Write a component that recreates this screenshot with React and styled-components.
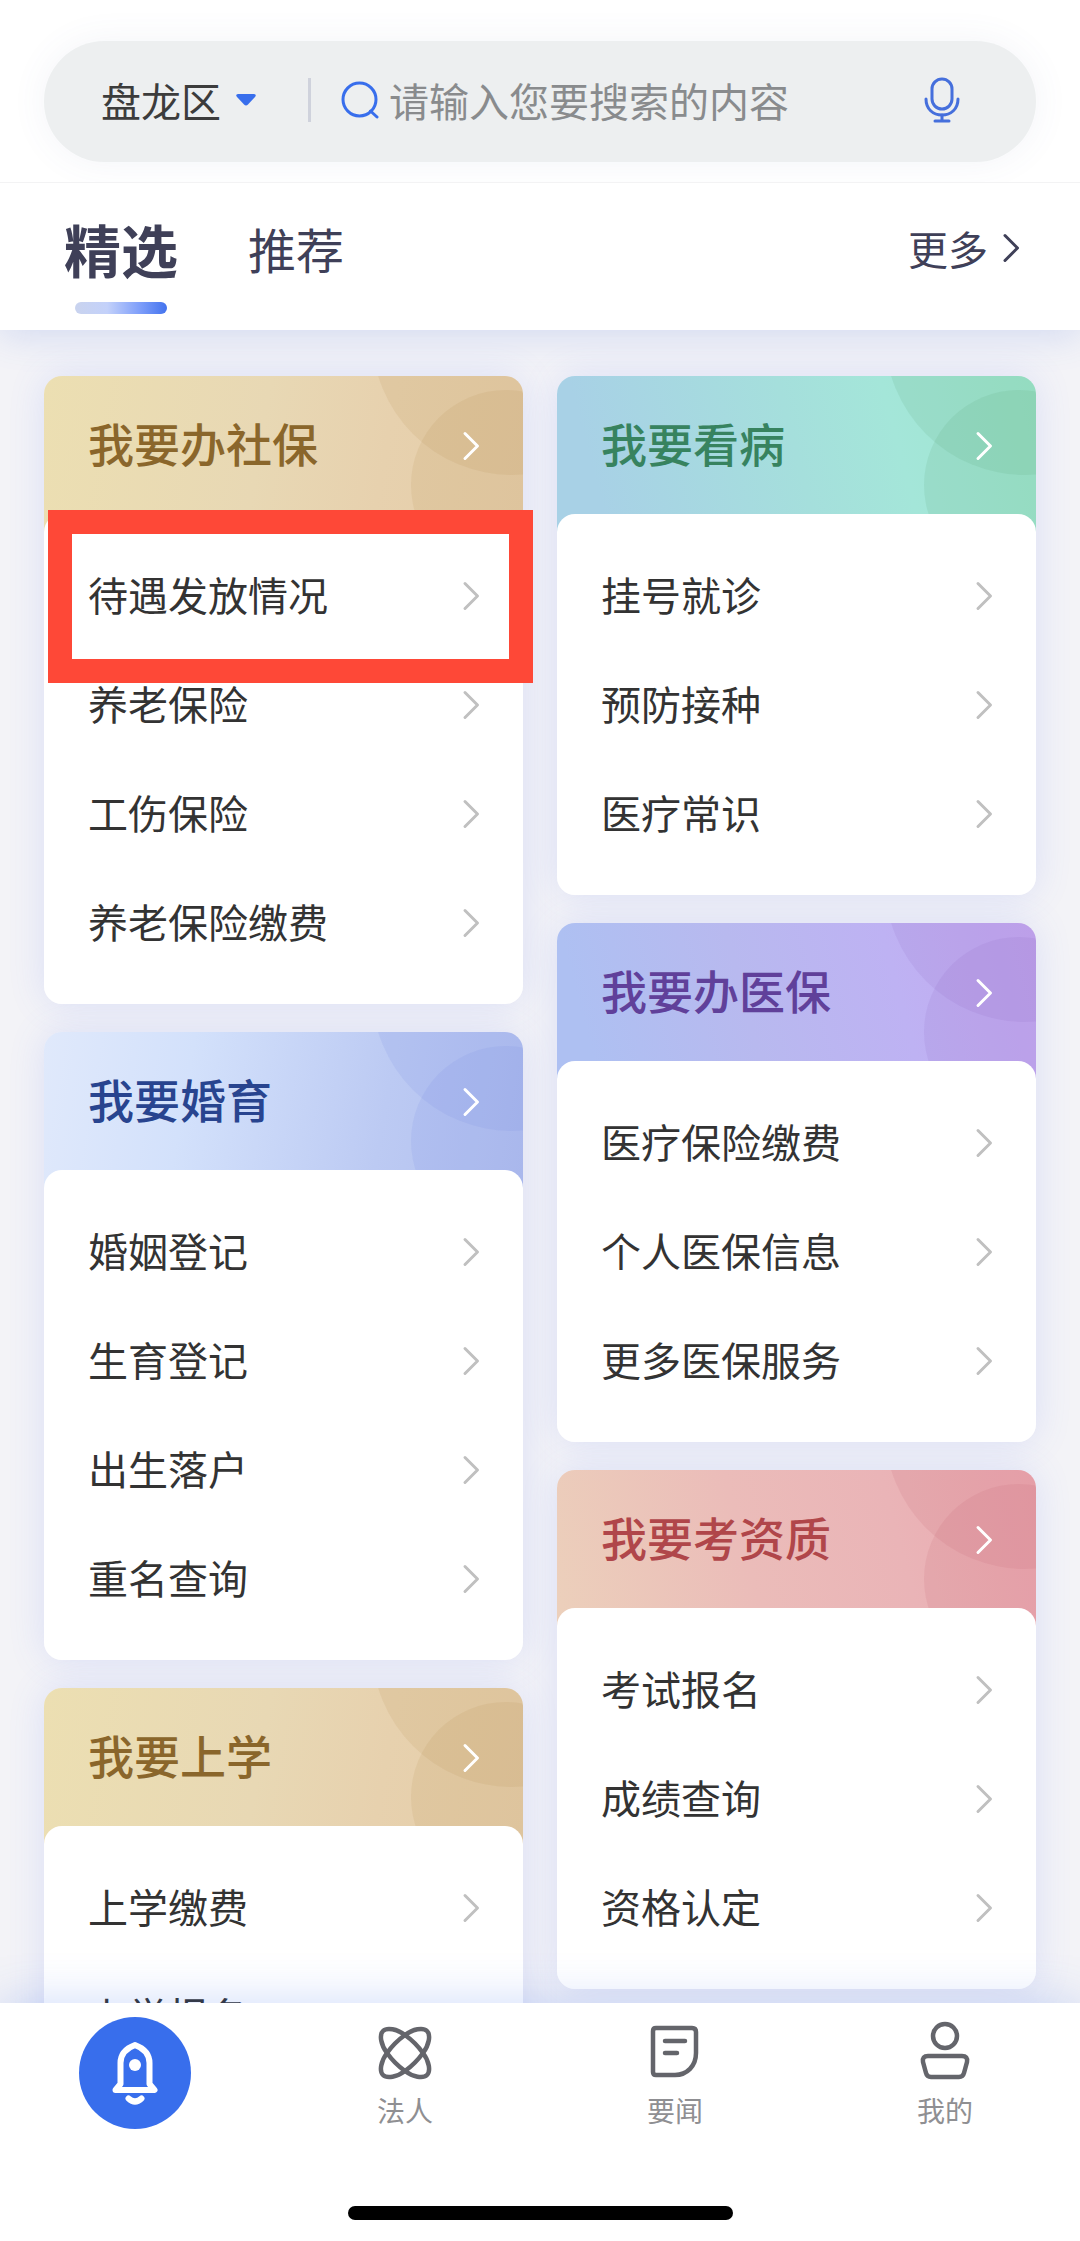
import React from 'react'
import styled, { createGlobalStyle } from 'styled-components'

const GlobalStyle = createGlobalStyle`
    *{
        box-sizing: border-box;
    }
    body{
        margin: 0;
        background: #f3f3f7;
        font-family: "Noto Sans CJK SC", sans-serif;
        color: #333;
    }
    a{
        color: inherit;
        text-decoration: none;
    }
    button, input, select{
        font-family: inherit;
        background: none;
        border: 0;
        padding: 0;
        outline: none;
    }
    svg{
        display: block;
        flex: none;
    }
`

const Page = styled.div`
    display: flex;
    flex-direction: column;
    height: 100vh;
`

const Header = styled.header`
    position: relative;
    z-index: 1;
    background: #fff;
    box-shadow: 0 4px 36px rgba(70, 110, 220, .2);
`

const SearchWrap = styled.div`
    padding: 41px 44px 20px;
    border-bottom: 1px solid #f3f3f4;
    overflow: hidden;
`

const SearchBar = styled.form`
    display: flex;
    align-items: center;
    height: 121px;
    padding: 0 76px 4px 57px;
    background: #edeff0;
    border-radius: 61px;
    box-shadow: 0 0 36px rgba(80, 100, 160, .07);
`

const Region = styled.label`
    display: flex;
    align-items: center;
    gap: 15px;
    select{
        appearance: none;
        color: #3c3c3c;
        font-size: 40px;
        line-height: 60px;
        height: 60px;
        cursor: pointer;
    }
    svg{
        pointer-events: none;
    }
`

const Divider = styled.span`
    width: 3px;
    height: 44px;
    margin: 0 30px 0 52px;
    background: #cfd2dc;
`

const SearchInput = styled.input`
    flex: 1;
    min-width: 0;
    height: 60px;
    margin-left: 10px;
    color: #333;
    font-size: 40px;
    &::placeholder{
        color: #898b8d;
        opacity: 1;
    }
`

const IconButton = styled.button`
    cursor: pointer;
`

const TabBar = styled.div`
    display: flex;
    align-items: flex-start;
    justify-content: space-between;
    padding: 25px 60px 16px 64px;
`

const Tabs = styled.div`
    display: flex;
    gap: 70px;
`

const Tab = styled.button`
    display: flex;
    flex-direction: column;
    align-items: center;
    gap: 14px;
    color: #3f4058;
    font-size: ${(p) => (p.$active ? 57 : 48)}px;
    font-weight: ${(p) => (p.$active ? 700 : 400)};
    line-height: 80px;
    cursor: pointer;
    &::after{
        content: '';
        width: 92px;
        height: 12px;
        border-radius: 6px;
        background: ${(p) => (p.$active ? 'linear-gradient(90deg, #c9d3ee, #c3d1fa 35%, #7f9ffa 70%, #4373ee)' : 'transparent')};
    }
`

const More = styled.a`
    display: flex;
    align-items: center;
    gap: 14px;
    color: #3f4058;
    font-size: 40px;
    line-height: 80px;
`

const Main = styled.main`
    flex: 1;
    min-height: 0;
    overflow-y: auto;
    scrollbar-width: none;
    padding: 46px 44px;
    display: grid;
    grid-template-columns: 1fr 1fr;
    align-items: start;
    gap: 34px;
`

const Column = styled.div`
    display: flex;
    flex-direction: column;
    gap: 28px;
`

const Card = styled.section`
    border-radius: 18px;
    box-shadow: 0 0 36px rgba(84, 112, 240, .15);
`

const CardHead = styled.a`
    position: relative;
    display: flex;
    align-items: center;
    justify-content: space-between;
    height: 156px;
    padding: 0 43px 16px 44px;
    border-radius: 18px 18px 0 0;
    overflow: hidden;
    background: ${(p) => p.$bg};
    color: ${(p) => p.$color};
    h2{
        position: relative;
        margin: 0;
        padding-bottom: 8px;
        font-size: 46px;
        font-weight: 500;
        line-height: 64px;
    }
`

const Bubbles = styled.svg`
    position: absolute;
    top: 0;
    right: 0;
    fill: ${(p) => p.$tint};
`

const HeadArrow = styled.span`
    position: relative;
`

const List = styled.ul`
    position: relative;
    list-style: none;
    margin: -18px 0 0;
    padding: 27px 0;
    background: #fff;
    border-radius: 18px;
`

const Item = styled.li`
    position: relative;
    a{
        display: flex;
        align-items: center;
        justify-content: space-between;
        height: 109px;
        padding: 0 43px 0 44px;
        font-size: 40px;
        line-height: 60px;
    }
    span{
        padding-bottom: 4px;
    }
`

const Highlight = styled.div`
    position: absolute;
    z-index: 1;
    top: -31px;
    right: -10px;
    bottom: -33px;
    left: 4px;
    border: 24px solid #fe4837;
    pointer-events: none;
`

const Footer = styled.footer`
    position: relative;
    z-index: 1;
    display: flex;
    flex-direction: column;
    justify-content: space-between;
    align-items: center;
    height: 238px;
    padding: 14px 0 21px;
    background: #fff;
    box-shadow: 0 0 44px rgba(60, 110, 240, .25);
`

const Nav = styled.nav`
    display: grid;
    grid-template-columns: repeat(4, 1fr);
    justify-items: center;
    width: 100%;
`

const NavItem = styled.a`
    display: flex;
    flex-direction: column;
    align-items: center;
    gap: 10px;
    padding-top: 3px;
    color: #8f8f92;
    font-size: 28px;
    line-height: 40px;
`

const NavActive = styled.a`
    display: flex;
    align-items: center;
    justify-content: center;
    width: 112px;
    height: 112px;
    border-radius: 50%;
    background: #386eec;
`

const HomeBar = styled.div`
    width: 385px;
    height: 14px;
    border-radius: 7px;
    background: #000;
`

const Chevron = ({ color }) => (
    <svg width="18" height="32" viewBox="0 0 18 32" fill="none" stroke={color} strokeWidth="3" strokeLinecap="round" strokeLinejoin="round">
        <path d="M3 3.500 L15.500 16 L3 28.500" />
    </svg>
)

const themes = {
    gold: {
        bg: 'linear-gradient(100deg, #ecdfb2, #e8d8b4 45%, #e7d1ae 70%, #e5cda9)',
        color: '#8a662b',
        tint: 'rgba(180, 140, 80, .13)',
    },
    green: {
        bg: 'linear-gradient(75deg, #a8d1e6 10%, #a5dfdc 50%, #a4e6d9 70%, #9ee6cc)',
        color: '#37835f',
        tint: 'rgba(90, 165, 120, .14)',
    },
    blue: {
        bg: 'linear-gradient(100deg, #e0e9fb, #d3e1fb 30%, #bccaf3 70%, #b2bfee)',
        color: '#28448f',
        tint: 'rgba(120, 140, 225, .15)',
    },
    purple: {
        bg: 'linear-gradient(75deg, #aec0f2 8%, #b8b9ef 40%, #beb2f3 70%, #c5a8ef)',
        color: '#60409a',
        tint: 'rgba(140, 100, 190, .13)',
    },
    red: {
        bg: 'linear-gradient(75deg, #ecd0bb, #ebbcb9 40%, #eab4b7 70%, #eba8b0)',
        color: '#b0464a',
        tint: 'rgba(195, 95, 105, .13)',
    },
}

const leftCards = [
    { title: '我要办社保', theme: 'gold', items: ['待遇发放情况', '养老保险', '工伤保险', '养老保险缴费'], marked: 0 },
    { title: '我要婚育', theme: 'blue', items: ['婚姻登记', '生育登记', '出生落户', '重名查询'] },
    { title: '我要上学', theme: 'gold', items: ['上学缴费', '上学报名'] },
]

const rightCards = [
    { title: '我要看病', theme: 'green', items: ['挂号就诊', '预防接种', '医疗常识'] },
    { title: '我要办医保', theme: 'purple', items: ['医疗保险缴费', '个人医保信息', '更多医保服务'] },
    { title: '我要考资质', theme: 'red', items: ['考试报名', '成绩查询', '资格认定'] },
]

const ServiceCard = ({ title, theme, items, marked }) => {
    const { bg, color, tint } = themes[theme]
    return (
        <Card>
            <CardHead href="#" $bg={bg} $color={color}>
                <Bubbles $tint={tint} width="150" height="156" viewBox="0 0 150 156">
                    <circle cx="139" cy="-41" r="140" />
                    <circle cx="133" cy="109" r="95" />
                </Bubbles>
                <h2>{title}</h2>
                <HeadArrow>
                    <Chevron color="#fff" />
                </HeadArrow>
            </CardHead>
            <List>
                {items.map((item, i) => (
                    <Item key={item}>
                        <a href="#">
                            <span>{item}</span>
                            <Chevron color="#c0c0c0" />
                        </a>
                        {marked === i && <Highlight />}
                    </Item>
                ))}
            </List>
        </Card>
    )
}

const App = () => {
    return (
        <Page>
            <GlobalStyle />
            <Header>
                <SearchWrap>
                    <SearchBar>
                        <Region>
                            <select aria-label="地区" defaultValue="盘龙区">
                                <option>盘龙区</option>
                            </select>
                            <svg width="20" height="12" viewBox="0 0 20 12" fill="#386eec">
                                <path d="M2 0 H18 Q21 0.500 19 3 L12 10.500 Q10 12.500 8 10.500 L1 3 Q-1 0.500 2 0 Z" />
                            </svg>
                        </Region>
                        <Divider />
                        <svg width="38" height="38" viewBox="0 0 38 38" fill="none" stroke="#386eec" strokeWidth="3" strokeLinecap="round">
                            <circle cx="18.500" cy="18.500" r="16.500" />
                            <path d="M29.500 30 L36 36" />
                        </svg>
                        <SearchInput type="text" aria-label="搜索" placeholder="请输入您要搜索的内容" />
                        <IconButton type="button" aria-label="语音">
                            <svg width="36" height="46" viewBox="0 0 36 46" fill="none" stroke="#456fdc" strokeWidth="3" strokeLinecap="round">
                                <rect x="8" y="2" width="20" height="30" rx="10" />
                                <path d="M2 22 C2 32 9 38 18 38 C27 38 34 32 34 22" />
                                <path d="M18 38 V44 M11 44 H25" />
                            </svg>
                        </IconButton>
                    </SearchBar>
                </SearchWrap>
                <TabBar>
                    <Tabs>
                        <Tab type="button" $active>精选</Tab>
                        <Tab type="button">推荐</Tab>
                    </Tabs>
                    <More href="#">
                        更多
                        <Chevron color="#3f4058" />
                    </More>
                </TabBar>
            </Header>
            <Main>
                <Column>
                    {leftCards.map((card) => <ServiceCard key={card.title} {...card} />)}
                </Column>
                <Column>
                    {rightCards.map((card) => <ServiceCard key={card.title} {...card} />)}
                </Column>
            </Main>
            <Footer>
                <Nav>
                    <NavActive href="#" aria-label="首页">
                        <svg width="48" height="64" viewBox="0 0 48 64" fill="none" stroke="#fff" strokeWidth="6" strokeLinecap="round" strokeLinejoin="round">
                            <path d="M9.500 43 V22 C9.500 13 16 7 24 4 C32 7 38.500 13 38.500 22 V43 L43.500 49 H4.500 Z" />
                            <circle cx="24" cy="24" r="6" fill="#fff" stroke="none" />
                            <path d="M17.500 57.500 Q24 63.500 30.500 57.500" />
                        </svg>
                    </NavActive>
                    <NavItem href="#">
                        <svg width="56" height="60" viewBox="-28 -33 56 60" fill="none" stroke="#64656b" strokeWidth="4.500" strokeLinejoin="round">
                            <path d="M0 -18 C8 -24 18 -26 22 -22 C26 -18 24 -8 18 0 C13 7 7 13 0 18 C-8 24 -18 26 -22 22 C-26 18 -24 8 -18 0 C-13 -7 -7 -13 0 -18 Z" />
                            <path d="M0 -18 C-8 -24 -18 -26 -22 -22 C-26 -18 -24 -8 -18 0 C-13 7 -7 13 0 18 C8 24 18 26 22 22 C26 18 24 8 18 0 C13 -7 7 -13 0 -18 Z" />
                        </svg>
                        法人
                    </NavItem>
                    <NavItem href="#">
                        <svg width="56" height="60" viewBox="0 0 56 60" fill="none" stroke="#64656b" strokeWidth="4.500" strokeLinecap="round" strokeLinejoin="round">
                            <path d="M9 8 H45 Q49 8 49 12 V33 C49 46 40 55 28 55 H9 Q6 55 6 52 V11 Q6 8 9 8 Z" />
                            <path d="M18 21 H38 M18 33 H30" />
                        </svg>
                        要闻
                    </NavItem>
                    <NavItem href="#">
                        <svg width="56" height="60" viewBox="0 0 56 60" fill="none" stroke="#64656b" strokeWidth="4.500" strokeLinejoin="round">
                            <circle cx="28" cy="16" r="12" />
                            <path d="M11 36 H45 Q51 36 50 42 L47 53 Q46 57 42 57 H14 Q10 57 9 53 L6 42 Q5 36 11 36 Z" />
                        </svg>
                        我的
                    </NavItem>
                </Nav>
                <HomeBar />
            </Footer>
        </Page>
    )
}

export default App
